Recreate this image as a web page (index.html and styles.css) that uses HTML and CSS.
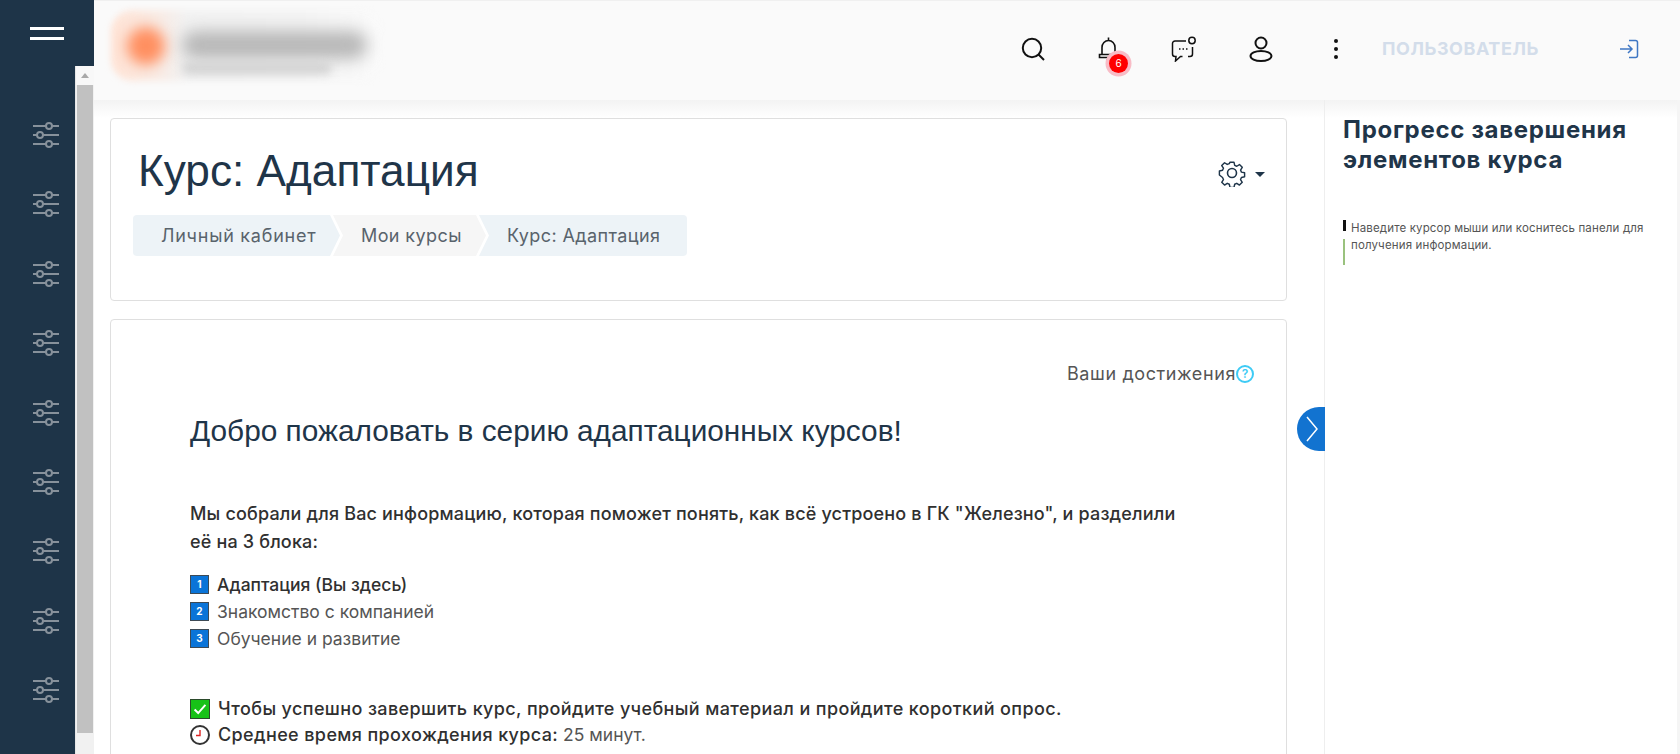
FILE: index.html
```html
<!DOCTYPE html>
<html lang="ru">
<head>
<meta charset="utf-8">
<title>Курс: Адаптация</title>
<link rel="stylesheet" href="styles.css">
</head>
<body>
<div class="app">
  <aside class="rail">
    <div class="rail-top"><span class="burger"></span></div>
    <div class="rail-body">
      <nav class="rail-icons">
        <svg class="sl" viewBox="0 0 28 26"><path d="M1 4H14M20 4H27M1 13H5M11 13H27M1 22H14M20 22H27"/><circle cx="17" cy="4" r="3"/><circle cx="8" cy="13" r="3"/><circle cx="17" cy="22" r="3"/></svg>
        <svg class="sl" viewBox="0 0 28 26"><path d="M1 4H14M20 4H27M1 13H5M11 13H27M1 22H14M20 22H27"/><circle cx="17" cy="4" r="3"/><circle cx="8" cy="13" r="3"/><circle cx="17" cy="22" r="3"/></svg>
        <svg class="sl" viewBox="0 0 28 26"><path d="M1 4H14M20 4H27M1 13H5M11 13H27M1 22H14M20 22H27"/><circle cx="17" cy="4" r="3"/><circle cx="8" cy="13" r="3"/><circle cx="17" cy="22" r="3"/></svg>
        <svg class="sl" viewBox="0 0 28 26"><path d="M1 4H14M20 4H27M1 13H5M11 13H27M1 22H14M20 22H27"/><circle cx="17" cy="4" r="3"/><circle cx="8" cy="13" r="3"/><circle cx="17" cy="22" r="3"/></svg>
        <svg class="sl" viewBox="0 0 28 26"><path d="M1 4H14M20 4H27M1 13H5M11 13H27M1 22H14M20 22H27"/><circle cx="17" cy="4" r="3"/><circle cx="8" cy="13" r="3"/><circle cx="17" cy="22" r="3"/></svg>
        <svg class="sl" viewBox="0 0 28 26"><path d="M1 4H14M20 4H27M1 13H5M11 13H27M1 22H14M20 22H27"/><circle cx="17" cy="4" r="3"/><circle cx="8" cy="13" r="3"/><circle cx="17" cy="22" r="3"/></svg>
        <svg class="sl" viewBox="0 0 28 26"><path d="M1 4H14M20 4H27M1 13H5M11 13H27M1 22H14M20 22H27"/><circle cx="17" cy="4" r="3"/><circle cx="8" cy="13" r="3"/><circle cx="17" cy="22" r="3"/></svg>
        <svg class="sl" viewBox="0 0 28 26"><path d="M1 4H14M20 4H27M1 13H5M11 13H27M1 22H14M20 22H27"/><circle cx="17" cy="4" r="3"/><circle cx="8" cy="13" r="3"/><circle cx="17" cy="22" r="3"/></svg>
        <svg class="sl" viewBox="0 0 28 26"><path d="M1 4H14M20 4H27M1 13H5M11 13H27M1 22H14M20 22H27"/><circle cx="17" cy="4" r="3"/><circle cx="8" cy="13" r="3"/><circle cx="17" cy="22" r="3"/></svg>
      </nav>
      <div class="scroll"><span class="scroll-up"></span><span class="scroll-thumb"></span></div>
    </div>
  </aside>
  <div class="page">
    <header class="top">
      <div class="logo"><span class="logo-plate"></span><span class="logo-dot"></span><span class="logo-text"></span><span class="logo-sub"></span></div>
      <div class="tools">
        <svg class="ic ic-search" viewBox="0 0 26 26"><circle cx="12" cy="12" r="9.2"/><path d="M18.500 18.500L24 24"/></svg>
        <span class="bell">
          <svg class="ic ic-bell" viewBox="0 0 24 26"><path d="M11.500 1.500v3M5 18v-6.500a6.500 7 0 0 1 13 0V18M2.500 18.500h18v3h-18zM9.500 24h4"/></svg>
          <span class="badge">6</span>
        </span>
        <svg class="ic ic-chat" viewBox="0 0 26 26"><path d="M15 5H4a2.500 2.500 0 0 0-2.500 2.500V18A2.500 2.500 0 0 0 4 20.500h1L4.500 25l5-4.500h2M17 20.500h2a2.500 2.500 0 0 0 2.500-2.500v-7"/><circle cx="21" cy="4.500" r="3.200"/><path class="dots" d="M8 13h1.500M11.500 13h1.500M15 13h1.500"/></svg>
        <svg class="ic ic-user" viewBox="0 0 26 26"><circle cx="13" cy="7" r="5.500"/><ellipse cx="13" cy="20" rx="10.500" ry="5"/></svg>
        <span class="kebab"><i></i><i></i><i></i></span>
        <span class="user">ПОЛЬЗОВАТЕЛЬ</span>
        <svg class="ic ic-login" viewBox="0 0 20 20"><path d="M10 1.500h6.500a2 2 0 0 1 2 2v13a2 2 0 0 1-2 2H10M1 10h12M9 6l4 4-4 4"/></svg>
      </div>
    </header>
    <div class="columns">
      <main class="main">
        <section class="card head-card">
          <div class="title-row">
            <h1>Курс: Адаптация</h1>
            <div class="gear">
              <svg class="gear-ic" viewBox="0 0 28 28"><circle cx="14" cy="14" r="4.500"/><path d="M11.800 2h4.400l.8 3.500 2.300 1 3-1.900 3.100 3.100-1.900 3 1 2.300 3.500.8v4.400l-3.500.8-1 2.300 1.900 3-3.100 3.100-3-1.900-2.300 1-.8 3.500h-4.400l-.8-3.500-2.300-1-3 1.900-3.100-3.100 1.900-3-1-2.300L0 16.200v-4.400l3.500-.8 1-2.300-1.900-3 3.100-3.100 3 1.900 2.300-1z" transform="translate(1.400 1.400) scale(.9)"/></svg>
              <span class="caret"></span>
            </div>
          </div>
          <ol class="crumbs">
            <li class="crumb c1">Личный кабинет</li>
            <li class="crumb c2">Мои курсы</li>
            <li class="crumb c3">Курс: Адаптация</li>
          </ol>
        </section>
        <section class="card body-card">
          <div class="achieve">Ваши достижения<span class="help">?</span></div>
          <div class="content">
            <h2>Добро пожаловать в серию адаптационных курсов!</h2>
            <p class="lead">Мы собрали для Вас информацию, которая поможет понять, как всё устроено в ГК "Железно", и разделили её на 3 блока:</p>
            <ul class="blocks">
              <li class="strong"><span class="num">1</span>Адаптация (Вы здесь)</li>
              <li><span class="num">2</span>Знакомство с компанией</li>
              <li><span class="num">3</span>Обучение и развитие</li>
            </ul>
            <ul class="facts">
              <li class="strong"><span class="check"><svg viewBox="0 0 20 20"><path d="M4 10.500l4 4 8-9"/></svg></span>Чтобы успешно завершить курс, пройдите учебный материал и пройдите короткий опрос.</li>
              <li><svg class="clock" viewBox="0 0 20 20"><circle cx="10" cy="10" r="9"/><path class="hand" d="M10 5v5.500H6"/></svg><b>Среднее время прохождения курса:</b><span class="plain"> 25 минут.</span></li>
            </ul>
          </div>
          <span class="toggle"><svg viewBox="0 0 14 28"><path d="M2 2l10 12L2 26"/></svg></span>
        </section>
      </main>
      <aside class="side">
        <h3>Прогресс завершения элементов курса</h3>
        <div class="hint">
          <div class="bars"><span class="bar-k"></span><span class="bar-g"></span></div>
          <p>Наведите курсор мыши или коснитесь панели для получения информации.</p>
        </div>
      </aside>
    </div>
  </div>
</div>
</body>
</html>
```
FILE: styles.css
```css
* { box-sizing: border-box; }
html, body { margin: 0; height: 754px; overflow: hidden; background: #fff; }
body { font-family: "Inter", "Noto Sans", sans-serif; color: #3b3b3b; }
.app { display: flex; height: 754px; }

.rail { width: 94px; flex: none; background: #1e3448; display: flex; flex-direction: column; }
.rail-top { height: 66px; padding: 27px 0 0 30px; flex: none; }
.burger { display: block; width: 34px; height: 13px; border-top: 3px solid #fff; border-bottom: 3px solid #fff; }
.rail-body { flex: 1; display: flex; min-height: 0; }
.rail-icons { width: 75px; flex: none; display: flex; flex-direction: column; align-items: center; gap: 43.400px; padding: 56px 0 0 17px; }
.sl { width: 28px; height: 26px; flex: none; fill: none; stroke: #87919b; stroke-width: 2; }
.scroll { width: 19px; flex: none; background: #f1f1f1; border-left: 1px solid #e6e6e6; padding: 0 1px; height: 688px; }
.scroll-up { display: block; height: 19px; position: relative; background: #f8f8f8; margin: 0 -1px; }
.scroll-up::after { content: ""; position: absolute; left: 5px; top: 7px; border: 4px solid transparent; border-top: 0; border-bottom: 5px solid #a9a9a9; }
.scroll-thumb { display: block; height: 648px; background: #c1c1c1; }

.page { flex: 1; min-width: 0; display: flex; flex-direction: column; background: #fff; }
.top { height: 100px; flex: none; background: #fafafa; border-top: 1px solid #f0f0f0; display: flex; align-items: center; justify-content: space-between; padding: 0 41px 0 17px; }
.logo { width: 275px; height: 71px; margin-top: -10px; position: relative; }
.logo-plate { position: absolute; left: 0; top: 0; width: 270px; height: 71px; border-radius: 22px; background: linear-gradient(90deg, #ffe3d5 0, #f8ece6 50px, #f2f2f2 75px, #f3f3f3 70%, #fafafa 100%); filter: blur(3px); }
.logo-dot { position: absolute; left: 16px; top: 17px; width: 38px; height: 38px; border-radius: 50%; background: #ff8f60; filter: blur(7px); }
.logo-text { position: absolute; left: 71px; top: 21px; width: 185px; height: 28px; border-radius: 14px; background: #b8b8b8; filter: blur(8px); }
.logo-sub { position: absolute; left: 71px; top: 52px; width: 150px; height: 12px; border-radius: 6px; background: #d2d2d2; filter: blur(5px); }
.tools { display: flex; align-items: center; height: 60px; margin-top: -4px; }
.ic { flex: none; fill: none; stroke: #111; stroke-width: 2; }
.ic-search { width: 26px; height: 26px; margin-right: 51px; }
.bell { position: relative; width: 24px; height: 26px; margin-right: 50px; }
.ic-bell { width: 24px; height: 26px; stroke-width: 1.600; display: block; }
.badge { position: absolute; left: 12px; top: 18px; width: 19px; height: 19px; border-radius: 50%; background: #f00; color: #fff; font-size: 10px; line-height: 19px; text-align: center; box-shadow: 0 0 0 3.500px #f8bcc6; }
.ic-chat { width: 26px; height: 26px; margin-right: 51px; stroke-width: 1.500; }
.ic-chat .dots { stroke-width: 1.300; }
.ic-user { width: 26px; height: 26px; margin-right: 60px; }
.kebab { display: flex; flex-direction: column; gap: 4px; width: 4px; margin-right: 44px; }
.kebab i { display: block; width: 4px; height: 4px; border-radius: 50%; background: #111; }
.user { font-size: 18px; font-weight: 700; letter-spacing: .55px; color: #d3ddea; width: 237px; }
.ic-login { width: 20px; height: 20px; stroke: #3f77c4; stroke-width: 1.500; }

.columns { flex: 1; min-height: 0; display: flex; position: relative; }
.columns::before { content: ""; position: absolute; left: 0; right: 0; top: 0; height: 18px; background: linear-gradient(#f3f3f3, #fff); pointer-events: none; }
.main { width: 1231px; flex: none; padding: 18px 38px 0 16px; border-right: 1px solid #eee; position: relative; }
.card { background: #fff; border: 1px solid #dfdfdf; border-radius: 4px; width: 1177px; }
.head-card { height: 183px; padding: 21px 21px 0 22px; position: relative; }
.title-row { display: flex; justify-content: space-between; align-items: center; height: 61px; }
h1 { margin: 0 0 0 5px; font: 400 44.200px/61px "Liberation Sans", sans-serif; color: #1f3549; }
.gear { display: flex; align-items: center; gap: 9px; margin-top: 4px; }
.gear-ic { width: 28px; height: 28px; fill: none; stroke: #1f3549; stroke-width: 1.600; stroke-linejoin: round; }
.caret { margin-top: 4px; border: 5.500px solid transparent; border-bottom: 0; border-top: 5px solid #1f3549; }
.crumbs { display: flex; list-style: none; margin: 14px 0 0; padding: 0; height: 41px; }
.crumb { height: 41px; line-height: 41px; font-size: 18px; letter-spacing: .4px; color: #59636c; margin-right: -7px; padding-left: 28px; }
.c1 { width: 207px; letter-spacing: .75px; background: #edf3f7; border-radius: 4px 0 0 4px; clip-path: polygon(0 0, 197px 0, 207px 50%, 197px 100%, 0 100%); }
.c2 { width: 153px; background: #f6f6f6; clip-path: polygon(0 0, 143px 0, 153px 50%, 143px 100%, 0 100%, 10px 50%); }
.c3 { width: 208px; background: #edf3f7; border-radius: 0 4px 4px 0; clip-path: polygon(0 0, 100% 0, 100% 100%, 0 100%, 10px 50%); }

.body-card { margin-top: 18px; height: 600px; position: relative; }
.achieve { position: absolute; right: 32px; top: 43px; font-size: 18px; letter-spacing: .6px; line-height: 22px; color: #555; display: flex; align-items: center; }
.help { width: 18px; height: 18px; border: 2px solid #3ecbf5; border-radius: 50%; color: #3ecbf5; font-size: 12px; font-weight: 600; line-height: 14px; letter-spacing: 0; text-align: center; }
.content { padding: 91px 90px 0 79px; }
h2 { margin: 0; font: 400 29.800px/40px "Liberation Sans", sans-serif; color: #1f3549; }
.lead { margin: 49px 0 0; font-size: 18px; letter-spacing: .17px; line-height: 28px; font-weight: 500; color: #303030; }
.blocks, .facts { list-style: none; margin: 0; padding: 0; line-height: 27px; color: #555; }
.blocks { margin-top: 15px; font-size: 17.500px; }
.blocks li { display: flex; align-items: center; }
.facts { margin-top: 44px; font-size: 18px; letter-spacing: .38px; line-height: 26px; }
.facts li { display: flex; align-items: center; white-space: pre-wrap; }
.strong { font-weight: 500; color: #303030; }
b { font-weight: 500; color: #303030; }
.plain { font-size: 17.500px; letter-spacing: 0; }
.num { width: 19px; height: 19px; margin-right: 8px; flex: none; background: #0a74d8; border: 1px solid #3d4a55; color: #fff; font-size: 10px; font-weight: 700; line-height: 17px; text-align: center; }
.check { width: 20px; height: 20px; margin-right: 8px; flex: none; background: #17c217; border: 1px solid #2b4a2b; }
.check svg { display: block; fill: none; stroke: #fff; stroke-width: 2.200; width: 18px; height: 18px; }
.clock { width: 20px; height: 20px; margin-right: 8px; flex: none; fill: #fff; stroke: #333; stroke-width: 2; }
.clock .hand { fill: none; stroke: #d22; stroke-width: 1.400; }
.toggle { position: absolute; left: 1186px; top: 87px; width: 28px; height: 44px; background: #1273d0; border-radius: 22px 0 0 22px; display: flex; align-items: center; padding-left: 8px; }
.toggle svg { width: 14px; height: 28px; fill: none; stroke: #fff; stroke-width: 1.500; }

.side { flex: 1; padding: 15px 30px 0 18px; border-right: 3px solid #f5f5f5; position: relative; }
h3 { margin: 0; font-size: 24px; letter-spacing: .7px; line-height: 30px; font-weight: 700; color: #1f3549; }
.hint { display: flex; gap: 5px; margin-top: 45px; }
.bars { width: 3px; flex: none; display: flex; flex-direction: column; }
.bar-k { height: 11px; width: 3px; background: #111; margin-bottom: 8px; }
.bar-g { height: 26px; width: 2px; background: #9ac27e; }
.hint p { margin: 0; font-size: 11.500px; letter-spacing: .15px; line-height: 17px; color: #555; }
```
